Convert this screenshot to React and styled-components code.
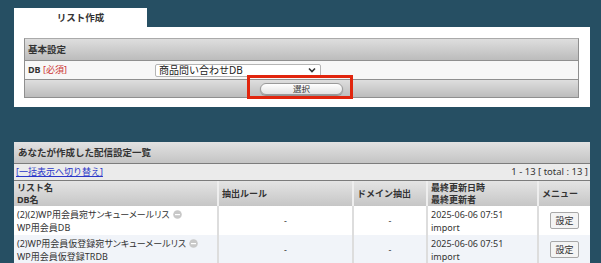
import styled, { createGlobalStyle } from 'styled-components'

const GlobalStyle = createGlobalStyle`
  body {
    margin: 0;
    background: #264f63;
    font-family: "Noto Sans", "Noto Sans CJK JP", sans-serif;
    font-size: 9px;
    line-height: 12px;
    color: #333;
  }
`

const rows = [
  { name: '(2)(2)WP用会員宛サンキューメールリス', db: 'WP用会員DB', date: '2025-06-06 07:51', by: 'import' },
  { name: '(2)WP用会員仮登録宛サンキューメールリス', db: 'WP用会員仮登録TRDB', date: '2025-06-06 07:51', by: 'import' },
]

const MinusIcon = () => (
  <svg width="9" height="9" viewBox="0 0 9 9" style={{ marginLeft: 3, verticalAlign: -1 }}>
    <circle cx="4.5" cy="4.5" r="4.3" fill="#c8c8c8" />
    <rect x="2" y="4" width="5" height="1.2" fill="#fff" />
  </svg>
)

const App = () => {
  return (
    <Page>
      <GlobalStyle />
      <Tab>リスト作成</Tab>
      <Panel>
        <SettingBox>
          <BoxHead>基本設定</BoxHead>
          <DbRow>
            <Label>DB <Required>[必須]</Required></Label>
            <SelectWrap>
              <span>商品問い合わせDB</span>
              <svg width="8" height="6" viewBox="0 0 8 6">
                <path d="M1 1.5 L4 4.5 L7 1.5" stroke="#333" strokeWidth="1.6" fill="none" />
              </svg>
            </SelectWrap>
          </DbRow>
          <ButtonRow>
            <Highlight />
            <PillButton>選択</PillButton>
          </ButtonRow>
        </SettingBox>
      </Panel>

      <ListPanel>
        <ListHead>あなたが作成した配信設定一覧</ListHead>
        <LinkRow>
          <a href="#">[一括表示へ切り替え]</a>
          <Count>1 - 13 [ total : 13 ]</Count>
        </LinkRow>
        <Table>
          <colgroup>
            <col style={{ width: 204 }} />
            <col style={{ width: 135 }} />
            <col style={{ width: 74 }} />
            <col style={{ width: 111 }} />
            <col style={{ width: 52 }} />
          </colgroup>
          <thead>
            <tr>
              <Th>リスト名<br />DB名</Th>
              <Th>抽出ルール</Th>
              <Th>ドメイン抽出</Th>
              <Th>最終更新日時<br />最終更新者</Th>
              <Th>メニュー</Th>
            </tr>
          </thead>
          <tbody>
            {rows.map((r, i) => (
              <Tr key={i} $alt={i % 2 === 1}>
                <Td>{r.name}<MinusIcon /><br />{r.db}</Td>
                <Td $center>-</Td>
                <Td $center>-</Td>
                <Td>{r.date}<br />{r.by}</Td>
                <Td $center><SmallButton>設定</SmallButton></Td>
              </Tr>
            ))}
          </tbody>
        </Table>
      </ListPanel>
    </Page>
  )
}

const Page = styled.div`
  width: 576px;
  padding: 8px 0 0 14px;
`

const Tab = styled.div`
  width: 133px;
  height: 19px;
  background: #fff;
  font-size: 9.5px;
  font-weight: bold;
  text-align: center;
  line-height: 19px;
`

const Panel = styled.div`
  background: #fff;
  height: 80px;
  box-sizing: border-box;
  padding: 11px 11px 0 10px;
`

const SettingBox = styled.div`
  border: 1px solid #8f8f8f;
  border-top-color: #aaa;
`

const grayGrad = `linear-gradient(#dedede, #bcbcbc)`

const BoxHead = styled.div`
  height: 21px;
  line-height: 21px;
  padding-left: 3px;
  font-size: 9.5px;
  font-weight: bold;
  background: ${grayGrad};
  border-bottom: 1px solid #8f8f8f;
`

const DbRow = styled.div`
  display: flex;
  align-items: center;
  height: 18px;
  background: #f7f7f7;
  border-bottom: 1px solid #8f8f8f;
`

const Label = styled.div`
  width: 127px;
  padding-left: 3px;
  font-weight: bold;
`

const Required = styled.span`
  color: #cc3333;
  font-weight: normal;
`

const SelectWrap = styled.div`
  width: 166px;
  height: 13px;
  box-sizing: border-box;
  display: flex;
  align-items: center;
  justify-content: space-between;
  padding: 0 4px 0 3px;
  background: #fff;
  border: 1px solid #b5b5b5;
  border-radius: 2px;
  font-size: 10px;
  color: #222;
  line-height: 11px;
`

const ButtonRow = styled.div`
  position: relative;
  height: 17px;
  display: flex;
  align-items: center;
  justify-content: center;
  background: ${grayGrad};
`

const PillButton = styled.button`
  width: 83px;
  height: 12px;
  padding: 0;
  border: 1px solid #9a9a9a;
  border-radius: 6px;
  background: linear-gradient(#ffffff, #e2e2e2);
  font-family: inherit;
  font-size: 8.5px;
  line-height: 10px;
  color: #333;
  box-shadow: 0 1px 1px rgba(0, 0, 0, 0.25);
`

const Highlight = styled.div`
  position: absolute;
  left: 222px;
  top: -5px;
  width: 106px;
  height: 24px;
  box-sizing: border-box;
  border: 3px solid #e1250d;
  pointer-events: none;
`

const ListPanel = styled.div`
  margin-top: 35px;
  background: #fff;
`

const ListHead = styled.div`
  height: 21px;
  line-height: 21px;
  padding-left: 4px;
  font-size: 9.5px;
  font-weight: bold;
  background: linear-gradient(#e2e2e2, #c4c4c4);
  border-bottom: 1px solid #7c7c7c;
`

const LinkRow = styled.div`
  display: flex;
  justify-content: space-between;
  align-items: center;
  height: 16px;
  padding: 0 2px;
  background: #ebebeb;
  border-bottom: 1px solid #7c7c7c;

  a {
    color: #2a36c8;
  }
`

const Count = styled.span`
  font-size: 9.5px;
`

const Table = styled.table`
  width: 100%;
  table-layout: fixed;
  border-collapse: collapse;
`

const Th = styled.th`
  height: 25px;
  padding: 0 3px;
  text-align: left;
  vertical-align: middle;
  font-weight: bold;
  line-height: 12px;
  background: linear-gradient(#e4e4e4, #c6c6c6);
  border-right: 2px solid #eee;
  &:last-child {
    border-right: none;
  }
`

const Tr = styled.tr`
  background: ${(p) => (p.$alt ? '#f1f4f9' : '#fff')};
`

const Td = styled.td`
  height: 29px;
  padding: 0 3px;
  line-height: 13px;
  vertical-align: middle;
  font-feature-settings: "palt";
  text-align: ${(p) => (p.$center ? 'center' : 'left')};
  white-space: nowrap;
  overflow: hidden;
  border-right: 2px solid #ddd;
  &:last-child {
    border-right: none;
  }
`

const SmallButton = styled.button`
  width: 29px;
  height: 17px;
  padding: 0;
  border: 1px solid #a8a8a8;
  border-radius: 2px;
  background: #f4f4f4;
  font-family: inherit;
  font-size: 9px;
  color: #333;
`

export default App
